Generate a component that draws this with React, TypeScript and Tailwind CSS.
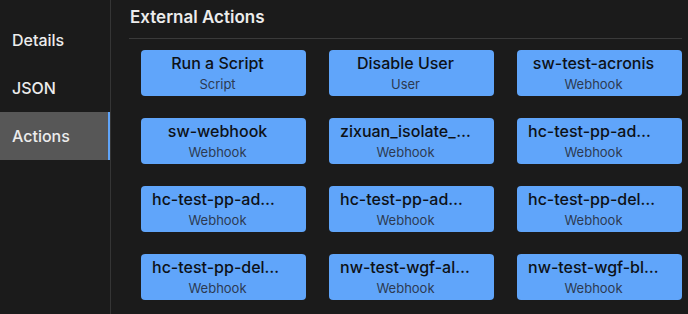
import { useState } from "react";

type Action = { name: string; kind: string };

const actions: Action[] = [
  { name: "Run a Script", kind: "Script" },
  { name: "Disable User", kind: "User" },
  { name: "sw-test-acronis", kind: "Webhook" },
  { name: "sw-webhook", kind: "Webhook" },
  { name: "zixuan_isolate_machine", kind: "Webhook" },
  { name: "hc-test-pp-add-user", kind: "Webhook" },
  { name: "hc-test-pp-add-group", kind: "Webhook" },
  { name: "hc-test-pp-add-member", kind: "Webhook" },
  { name: "hc-test-pp-delete-user", kind: "Webhook" },
  { name: "hc-test-pp-delete-group", kind: "Webhook" },
  { name: "nw-test-wgf-allow-list", kind: "Webhook" },
  { name: "nw-test-wgf-block-list", kind: "Webhook" },
];

const tabs = ["Details", "JSON", "Actions"];

function ActionCard({ action }: { action: Action }) {
  return (
    <button className="h-[46px] rounded-[4px] bg-[#60a5fa] pl-[11px] pr-[23px] pt-[2px] flex flex-col items-stretch text-center">
      <span className="truncate text-[16px] leading-[22px] font-medium text-[#0d1117]">
        {action.name}
      </span>
      <span className="mt-px text-[13px] leading-[18px] text-[#2c3a52]">{action.kind}</span>
    </button>
  );
}

export default function App() {
  const [tab, setTab] = useState("Actions");

  return (
    <div
      className="h-[314px] w-[688px] overflow-hidden bg-[#1b1b1b] flex"
      style={{ fontFamily: "Inter, 'Noto Sans', sans-serif" }}
    >
      {/* sidebar */}
      <div className="w-[111px] shrink-0 border-r border-[#353535] pt-4 flex flex-col">
        {tabs.map((t) => (
          <div
            key={t}
            onClick={() => setTab(t)}
            className={
              t === tab
                ? "h-12 flex items-center pl-3 text-[16px] font-medium text-[#ececec] bg-[#575757] border-r-2 border-[#60a5fa]"
                : "h-12 flex items-center pl-3 text-[16px] font-medium text-[#ececec]"
            }
          >
            {t}
          </div>
        ))}
      </div>

      {/* main */}
      <div className="flex-1 pl-[18px] pr-[6px]">
        <div className="h-[39px] border-b border-[#3a3a3a] pl-px pt-[5px]">
          <h2 className="text-[17px] leading-[24px] font-semibold text-[#ececec]">External Actions</h2>
        </div>
        <div className="grid grid-cols-3 gap-x-[23px] gap-y-[22px] pl-3 pt-[11px]">
          {actions.map((a) => (
            <ActionCard key={a.name} action={a} />
          ))}
        </div>
      </div>
    </div>
  );
}
